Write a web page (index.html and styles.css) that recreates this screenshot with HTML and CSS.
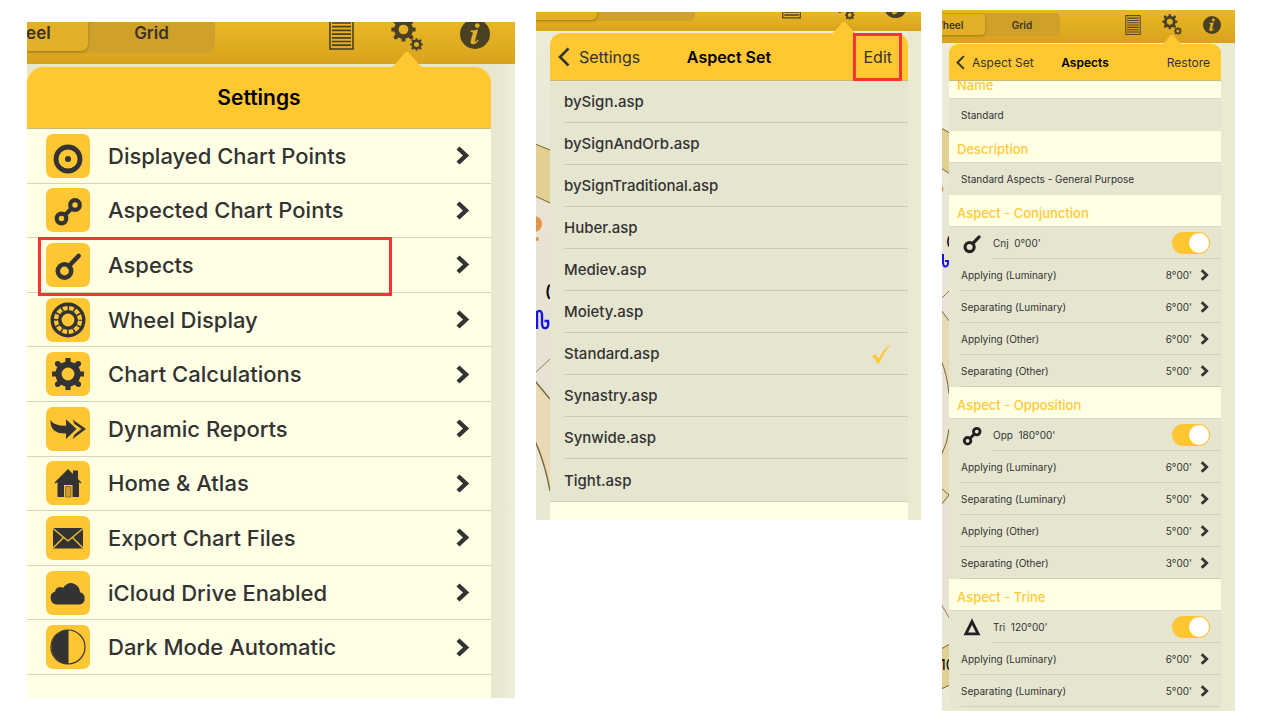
FILE: index.html
```
<!DOCTYPE html>
<html lang="en">
<head>
    <meta charset="UTF-8">
    <meta name="viewport" content="width=device-width, initial-scale=1.0">
    <title>Aspect settings</title>
    <link rel="stylesheet" href="styles.css">
</head>
<body>
    <!-- shared icons -->
    <svg class="sprite" aria-hidden="true">
        <symbol id="gear" viewBox="-16 -16 32 32">
            <circle r="9.2" fill="none" stroke="currentColor" stroke-width="6"/>
            <path d="M0-11V-15.500M0 11V15.500M-11 0H-15.500M11 0H15.500M-7-7L-10-10M7-7L10-10M-7 7L-10 10M7 7L10 10" stroke="currentColor" stroke-width="5"/>
            <path d="M-10-10h0M10-10h0M-10 10h0M10 10h0" stroke="currentColor" stroke-width="5.400" stroke-linecap="round"/>
        </symbol>
        <symbol id="gears" viewBox="0 0 32 34">
            <use href="#gear" x="0" y="0" width="25" height="25"/>
            <use href="#gear" x="19" y="21" width="13" height="13"/>
        </symbol>
        <symbol id="page" viewBox="0 0 25 32">
            <rect x="1" y="1" width="23" height="30" fill="none" stroke="currentColor" stroke-width="1.600"/>
            <path d="M3 5h19M3 8.700h19M3 12.400h19M3 16.100h19M3 19.800h19M3 23.500h19M3 27.200h19" stroke="currentColor" stroke-width="1.700"/>
        </symbol>
        <symbol id="info" viewBox="0 0 30 30">
            <circle cx="15" cy="15" r="15" fill="currentColor"/>
            <circle cx="17.300" cy="6.600" r="2.400" fill="#e2ae22"/>
            <path d="M10.600 11.600q4-.2 7.400-1.200l-3 11q-.4 1.700.7 1.200q1-.6 2-2l.8.7q-2.300 4.200-5.700 4q-3-.3-2-4l2-7q.4-1.500-2.400-1.500z" fill="#e2ae22"/>
        </symbol>
        <symbol id="chevron" viewBox="0 0 13 19">
            <path d="M2 2l8 7.500l-8 7.500" fill="none" stroke="currentColor" stroke-width="4.400"/>
        </symbol>
        <symbol id="back" viewBox="0 0 12 20">
            <path d="M10.500 1.500L2 10l8.500 8.500" fill="none" stroke="currentColor" stroke-width="2.600"/>
        </symbol>
        <symbol id="arrow" viewBox="0 0 40 18">
            <path d="M0 18q4-.5 6.500-3L17.500 2.300q2.500-2.600 5 0L33.500 15q2.500 2.500 6.500 3z" fill="#ffc832"/>
        </symbol>
        <symbol id="conjunction" viewBox="0 0 44 44">
            <circle cx="18.500" cy="28" r="6.700" fill="none" stroke="currentColor" stroke-width="4.600"/>
            <path d="M23 23L32.500 13" stroke="currentColor" stroke-width="4.600" stroke-linecap="round"/>
        </symbol>
        <symbol id="opposition" viewBox="0 0 44 44">
            <circle cx="15.500" cy="30.500" r="4.800" fill="none" stroke="currentColor" stroke-width="4.200"/>
            <circle cx="29" cy="17" r="4.800" fill="none" stroke="currentColor" stroke-width="4.200"/>
            <path d="M19 27L25.500 20.500" stroke="currentColor" stroke-width="4.200"/>
        </symbol>
    </svg>

    <main class="board">
        <!-- settings menu -->
        <section class="phone large">
            <div class="topbar">
                <div class="tools">
                    <div class="segments">
                        <button class="on">Wheel</button>
                        <button>Grid</button>
                    </div>
                    <button class="tool" aria-label="Report"><svg class="page"><use href="#page"/></svg></button>
                    <button class="tool" aria-label="Settings"><svg class="gears"><use href="#gears"/></svg></button>
                    <button class="tool" aria-label="Info"><svg class="info"><use href="#info"/></svg></button>
                </div>
            </div>
            <div class="backdrop">
                <div class="panel">
                    <svg class="arrow"><use href="#arrow"/></svg>
                    <header class="head"><h2>Settings</h2></header>
                    <ul class="menu">
                        <li><a href="#">
                            <svg class="tile" viewBox="0 0 44 44"><circle cx="22" cy="25" r="12" fill="none" stroke="currentColor" stroke-width="4.800"/><circle cx="22" cy="25" r="3"/></svg>
                            <span>Displayed Chart Points</span><svg class="chev"><use href="#chevron"/></svg></a></li>
                        <li><a href="#">
                            <svg class="tile"><use href="#opposition"/></svg>
                            <span>Aspected Chart Points</span><svg class="chev"><use href="#chevron"/></svg></a></li>
                        <li class="marked"><a href="#">
                            <svg class="tile"><use href="#conjunction"/></svg>
                            <span>Aspects</span><svg class="chev"><use href="#chevron"/></svg></a></li>
                        <li><a href="#">
                            <svg class="tile" viewBox="0 0 44 44"><g fill="none" stroke="currentColor"><circle cx="22" cy="22" r="15.800" stroke-width="3.400"/><circle cx="22" cy="22" r="8.200" stroke-width="3.600"/><circle cx="22" cy="22" r="12" stroke-width="5" stroke-dasharray="1.600 4.683" stroke-dashoffset=".8"/></g></svg>
                            <span>Wheel Display</span><svg class="chev"><use href="#chevron"/></svg></a></li>
                        <li><a href="#">
                            <svg class="tile" viewBox="0 0 44 44"><use href="#gear" x="5.500" y="5.500" width="33" height="33"/></svg>
                            <span>Chart Calculations</span><svg class="chev"><use href="#chevron"/></svg></a></li>
                        <li><a href="#">
                            <svg class="tile" viewBox="0 0 44 44"><path d="M4.500 13Q8 19 20 18.800V12.300L30.500 22L20 32V26.500Q4 27 4.500 13z"/><path d="M26.500 12.500L40 22L26.500 32L28.500 27.500L35.500 22L28.500 17z"/></svg>
                            <span>Dynamic Reports</span><svg class="chev"><use href="#chevron"/></svg></a></li>
                        <li><a href="#">
                            <svg class="tile" viewBox="0 0 44 44"><path d="M22 8L35.500 21.500L34.500 22.500L33 21V36H26.500V24H18V36H11.500V21L9.500 22.500L8.500 21.500z"/><path d="M27 9.500h5v9l-5-5z"/><path d="M19.500 25.500h5.500V36h-5.500z" fill="#c99c2c" stroke="#7a6228" stroke-width=".8"/></svg>
                            <span>Home &amp; Atlas</span><svg class="chev"><use href="#chevron"/></svg></a></li>
                        <li><a href="#">
                            <svg class="tile" viewBox="0 0 44 44"><path d="M7 12H37V32.500H7z"/><path d="M7 12.500L22 25L37 12.500M7 32L17.500 21.500M37 32L26.500 21.500" fill="none" stroke="#ffc634" stroke-width="1.200"/></svg>
                            <span>Export Chart Files</span><svg class="chev"><use href="#chevron"/></svg></a></li>
                        <li><a href="#">
                            <svg class="tile" viewBox="0 0 44 44"><path d="M11 33.500A6.700 6.700 0 0 1 9 20.500A5.200 5.200 0 0 1 17 17A9 9 0 0 1 34 21.300A6.300 6.300 0 0 1 34 33.500z"/></svg>
                            <span>iCloud Drive Enabled</span><svg class="chev"><use href="#chevron"/></svg></a></li>
                        <li><a href="#">
                            <svg class="tile" viewBox="0 0 44 44"><circle cx="22" cy="22" r="17" fill="none" stroke="currentColor" stroke-width="1.200"/><path d="M22.500 5A17 17 0 0 0 22.500 39z"/></svg>
                            <span>Dark Mode Automatic</span><svg class="chev"><use href="#chevron"/></svg></a></li>
                    </ul>
                </div>
            </div>
        </section>

        <!-- list of aspect sets -->
        <section class="phone medium">
            <div class="topbar">
                <div class="tools">
                    <div class="segments">
                        <button class="on" aria-label="Wheel"></button>
                        <button aria-label="Grid"></button>
                    </div>
                    <button class="tool" aria-label="Report"><svg class="page"><use href="#page"/></svg></button>
                    <button class="tool" aria-label="Settings"><svg class="gears"><use href="#gears"/></svg></button>
                    <button class="tool" aria-label="Info"><svg class="info"><use href="#info"/></svg></button>
                </div>
            </div>
            <div class="backdrop">
                <svg class="chart" viewBox="0 0 14 489" preserveAspectRatio="xMinYMin slice">
                    <path d="M-1 111L14 117V170L-1 163z" fill="#e1d092"/>
                    <path d="M-1 111L14 117M14 170L-1 163" stroke="#77652a"/>
                    <circle cx="-2" cy="191" r="8" fill="#e29645"/>
                    <circle cx="1" cy="206" r="2" fill="#e29645"/>
                    <text x="9" y="264" font-size="16" font-weight="600">(</text>
                    <path d="M1 296V279Q5 276 6 281V290Q6 296 10 295Q13 294 12 288H8.500" fill="none" stroke="#1414e6" stroke-width="2.400"/>
                    <path d="M-1 348L14 366V458Q9 430-1 408z" fill="#e7dab4"/>
                    <path d="M-1 340L14 326" stroke="#8d8052"/>
                    <path d="M-1 348L14 366M-1 408Q9 430 14 458" fill="none" stroke="#77652a" stroke-width="1.400"/>
                </svg>
                <div class="panel">
                    <svg class="arrow"><use href="#arrow"/></svg>
                    <header class="head">
                        <button class="link"><svg class="back"><use href="#back"/></svg>Settings</button>
                        <h2>Aspect Set</h2>
                        <button class="link edit">Edit</button>
                    </header>
                    <ul class="files">
                        <li>bySign.asp</li>
                        <li>bySignAndOrb.asp</li>
                        <li>bySignTraditional.asp</li>
                        <li>Huber.asp</li>
                        <li>Mediev.asp</li>
                        <li>Moiety.asp</li>
                        <li>Standard.asp <svg class="check" viewBox="0 0 20 20"><path d="M1 12L4.500 10.500L7.500 15.500Q12 6 19 1Q12.500 8.500 8 19H6.500Q4.500 14.500 1 12z" fill="#ffc634" stroke="#ffc634" stroke-width=".5"/></svg></li>
                        <li>Synastry.asp</li>
                        <li>Synwide.asp</li>
                        <li>Tight.asp</li>
                    </ul>
                </div>
            </div>
        </section>

        <!-- orbs of the chosen set -->
        <section class="phone small">
            <div class="topbar">
                <div class="tools">
                    <div class="segments">
                        <button class="on">Wheel</button>
                        <button>Grid</button>
                    </div>
                    <button class="tool" aria-label="Report"><svg class="page"><use href="#page"/></svg></button>
                    <button class="tool" aria-label="Settings"><svg class="gears"><use href="#gears"/></svg></button>
                    <button class="tool" aria-label="Info"><svg class="info"><use href="#info"/></svg></button>
                </div>
            </div>
            <div class="backdrop">
                <svg class="chart" viewBox="0 0 7 667" preserveAspectRatio="xMinYMin slice">
                    <path d="M-1 84L8 89V130L-1 124z" fill="#e1d092"/>
                    <path d="M-1 84L8 89M8 130L-1 124" stroke="#77652a"/>
                    <circle cx="-2" cy="145" r="3.500" fill="#e29645"/>
                    <text x="4" y="201" font-size="12" font-weight="600">(</text>
                    <path d="M1 210V218Q1 223 4 222.500Q6.500 222 6 217H3" fill="none" stroke="#1414e6" stroke-width="2"/>
                    <path d="M-1 266L8 278V450L-1 462V408Q8 390 8 370Q8 340-1 316z" fill="#e7dab4"/>
                    <path d="M-1 408Q8 390 8 366Q8 340-1 316z" fill="#e8e2d4"/>
                    <path d="M-1 255L8 246M-1 560L8 575" stroke="#8d8052"/>
                    <path d="M-1 266L8 278M-1 316Q5 330 7 350M7 385Q6 398-1 412M-1 444L7 451L-1 461" fill="none" stroke="#77652a"/>
                    <path d="M-1 605L8 600V641L-1 645z" fill="#e1d092"/>
                    <path d="M-1 605L8 600M8 641L-1 645" stroke="#77652a"/>
                    <text x="-2" y="626" font-size="14">10</text>
                </svg>
                <div class="panel">
                    <svg class="arrow"><use href="#arrow"/></svg>
                    <header class="head">
                        <button class="link"><svg class="back"><use href="#back"/></svg>Aspect Set</button>
                        <h2>Aspects</h2>
                        <button class="link">Restore</button>
                    </header>
                    <div class="scroll">
                        <div class="orbs">
                            <h3>Name</h3>
                            <p>Standard</p>
                            <h3>Description</h3>
                            <p>Standard Aspects - General Purpose</p>

                            <h3>Aspect - Conjunction</h3>
                            <label class="aspect"><svg class="glyph"><use href="#conjunction"/></svg><span>Cnj&nbsp; 0°00'</span><input type="checkbox" checked></label>
                            <a href="#">Applying (Luminary)<b>8°00'</b><svg class="chev"><use href="#chevron"/></svg></a>
                            <a href="#">Separating (Luminary)<b>6°00'</b><svg class="chev"><use href="#chevron"/></svg></a>
                            <a href="#">Applying (Other)<b>6°00'</b><svg class="chev"><use href="#chevron"/></svg></a>
                            <a href="#">Separating (Other)<b>5°00'</b><svg class="chev"><use href="#chevron"/></svg></a>

                            <h3>Aspect - Opposition</h3>
                            <label class="aspect"><svg class="glyph"><use href="#opposition"/></svg><span>Opp&nbsp; 180°00'</span><input type="checkbox" checked></label>
                            <a href="#">Applying (Luminary)<b>6°00'</b><svg class="chev"><use href="#chevron"/></svg></a>
                            <a href="#">Separating (Luminary)<b>5°00'</b><svg class="chev"><use href="#chevron"/></svg></a>
                            <a href="#">Applying (Other)<b>5°00'</b><svg class="chev"><use href="#chevron"/></svg></a>
                            <a href="#">Separating (Other)<b>3°00'</b><svg class="chev"><use href="#chevron"/></svg></a>

                            <h3>Aspect - Trine</h3>
                            <label class="aspect"><svg class="glyph" viewBox="0 0 44 44"><path d="M22 14L31 32H13z" fill="none" stroke="currentColor" stroke-width="4.200"/></svg><span>Tri&nbsp; 120°00'</span><input type="checkbox" checked></label>
                            <a href="#">Applying (Luminary)<b>6°00'</b><svg class="chev"><use href="#chevron"/></svg></a>
                            <a href="#">Separating (Luminary)<b>5°00'</b><svg class="chev"><use href="#chevron"/></svg></a>
                        </div>
                    </div>
                </div>
            </div>
        </section>
    </main>
</body>
</html>
```

FILE: styles.css
```
*{margin: 0; padding: 0; box-sizing: border-box;}
body{
    background-color: #fff;
    color: #333;
    font-family: Inter, "Liberation Sans", sans-serif;
}
ul{list-style: none;}
a{color: inherit; text-decoration: none;}
button{
    border: none;
    background: none;
    color: inherit;
    font: inherit;
    cursor: pointer;
}
svg{display: block; flex: none;}
.sprite{
    position: absolute;
    width: 0;
    height: 0;
}
.board{
    display: flex;
    align-items: flex-start;
    gap: 21px;
    padding: 10px 45px 0 27px;
}
.phone{
    min-width: 0;
    overflow: hidden;
}
.large{flex: 488 1 0; margin-top: 12px;}
.medium{flex: 385 1 0; margin-top: 2px;}
.small{flex: 293 1 0;}

/* toolbar */
.topbar{
    overflow: hidden;
    background: linear-gradient(#eab726, #d8a31c);
}
.tools{
    display: flex;
    align-items: center;
}
.tool{color: #4a4125;}
.segments{
    display: flex;
    height: 100%;
    margin-right: auto;
    background-color: #cfa12a;
    color: #3a3424;
    font-weight: 600;
}
.segments .on{
    background-color: #e3af26;
    box-shadow: 0 1px 3px rgba(90, 60, 0, 0.4);
}
.large .topbar{padding-bottom: 11px;}
.large .tools{
    height: 38px;
    margin-top: -7px;
    padding-right: 25px;
    gap: 37px;
}
.large .segments{
    margin-left: -66px;
    padding-bottom: 2px;
    border-radius: 9px;
    font-size: 17px;
}
.large .segments button{width: 127px; border-radius: 7px;}
.large .page{width: 25px; height: 32px;}
.large .gears{width: 32px; height: 34px;}
.large .info{width: 30px; height: 30px;}

.medium .topbar{padding-bottom: 10px;}
.medium .tools{
    height: 29px;
    margin-top: -20px;
    padding-right: 14px;
    gap: 29px;
}
.medium .segments{
    margin-left: -37px;
    padding-bottom: 1px;
    border-radius: 7px;
}
.medium .segments button{width: 98px; border-radius: 6px;}
.medium .page{width: 19px; height: 25px;}
.medium .gears{width: 25px; height: 26px;}
.medium .info{width: 23px; height: 23px;}

.small .topbar{padding-bottom: 7px;}
.small .tools{
    height: 23px;
    margin-top: 3px;
    padding-right: 14px;
    gap: 21px;
}
.small .segments{
    margin-left: -32px;
    padding: 1px;
    border-radius: 5px;
    font-size: 10px;
}
.small .segments button{width: 74px; border-radius: 4px;}
.small .page{width: 16px; height: 20px;}
.small .gears{width: 20px; height: 21px;}
.small .info{width: 18px; height: 18px;}

/* chart behind the popover */
.backdrop{
    display: flex;
    background: linear-gradient(#ececd8, #e8e2d4 45%, #e8e2d4 80%, #eaead3);
}
.large .backdrop{
    padding: 3px 24px 0 0;
    background: linear-gradient(to right, #e7e7cf 95%, #ededd9);
}
.medium .backdrop{padding: 2px 13px 0 0;}
.small .backdrop{padding: 1px 14px 2px 0;}
.medium .chart{width: 14px; height: 487px;}
.small .chart{width: 7px; height: 664px;}
.medium .backdrop, .small .backdrop{
    background:
        linear-gradient(#eaead3, #eaead3) right / 14px 100% no-repeat,
        linear-gradient(#ececd8, #e8e2d4 45%, #e8e2d4 80%, #eaead3);
}

/* popover */
.panel{
    position: relative;
    flex: 1;
    min-width: 0;
    background-color: #ffffe6;
}
.arrow{position: absolute; bottom: 100%;}
.head{
    display: grid;
    grid-template-columns: 1fr auto 1fr;
    align-items: center;
    background-color: #ffc832;
    border-bottom: 1px solid #c8b878;
}
.head h2{
    grid-column: 2;
    color: #000;
    font-weight: 600;
}
.link{
    display: flex;
    align-items: center;
    justify-self: start;
}
.head h2 + .link{justify-self: end;}

.large .panel{border-radius: 16px 16px 0 0; padding-bottom: 23px;}
.large .arrow{right: 64px; width: 40px; height: 17px; margin-bottom: -1px;}
.large .head{height: 62px; border-radius: 16px 16px 0 0;}
.large h2{font-size: 21px;}
.menu{
    display: grid;
    grid-auto-rows: 1fr;
    min-height: 546px;
}
.menu li{
    position: relative;
    border-bottom: 1px solid #d4d4c2;
}
.menu a{
    display: flex;
    align-items: center;
    height: 100%;
    padding: 0 22px 0 19px;
    font-size: 22px;
    font-weight: 500;
}
.menu span{flex: 1; padding-left: 18px;}
.tile{
    width: 44px;
    height: 44px;
    border-radius: 7px;
    background-color: #ffc634;
    color: #333;
    fill: currentColor;
}
.menu .chev{width: 13px; height: 19px;}
/* red frame round the item to tap */
.marked::after{
    content: "";
    position: absolute;
    top: -1px;
    right: 99px;
    bottom: -4px;
    left: 11px;
    z-index: 1;
    border: 3px solid #ff3333;
    pointer-events: none;
}

.medium .panel{border-radius: 12px 12px 0 0; padding-bottom: 18px;}
.medium .arrow{right: 49px; width: 30px; height: 13px; margin-bottom: -1px;}
.medium .head{height: 48px; padding: 0 8px; border-radius: 12px 12px 0 0;}
.medium h2, .medium .link{font-size: 16px;}
.medium .back{width: 12px; height: 20px; margin-right: 9px;}
.edit{position: relative; margin-right: 8px;}
.edit::after{
    content: "";
    position: absolute;
    inset: -14px -10px;
    border: 3px solid #ff3333;
    pointer-events: none;
}
.files{
    display: grid;
    grid-auto-rows: 1fr;
    min-height: 421px;
    padding-left: 14px;
    background-color: #e5e5d0;
    border-bottom: 1px solid #cfcfbc;
    font-size: 15px;
    font-weight: 500;
}
.files li{
    display: flex;
    align-items: center;
    justify-content: space-between;
    padding-right: 17px;
    border-bottom: 1px solid #cacab8;
}
.files li:last-child{border-bottom: none;}
.check{width: 20px; height: 20px;}

.small .panel{
    border-radius: 9px 9px 6px 6px;
    background-color: #e5e5d0;
}
.small .arrow{right: 37px; width: 24px; height: 11px; margin-bottom: -1px;}
.small .head{height: 37px; padding: 0 7px; border-radius: 9px 9px 0 0;}
.small h2, .small .link{font-size: 12px;}
.small .head h2 + .link{margin-right: 4px;}
.small .back{width: 9px; height: 15px; margin-right: 7px;}
.scroll{overflow: hidden;}
/* scrolled a little way down */
.orbs{
    margin-top: -14px;
    padding-bottom: 2px;
    font-size: 10px;
}
.orbs h3{
    height: 32px;
    padding-left: 8px;
    background-color: #ffffe6;
    border-bottom: 1px solid #d6d6c2;
    color: #ffc938;
    font-size: 13px;
    font-weight: 500;
    line-height: 36px;
}
.orbs p{
    height: 32px;
    padding-left: 12px;
    line-height: 32px;
}
.orbs a, .aspect{
    display: flex;
    align-items: center;
    height: 32px;
    margin-left: 12px;
    padding-right: 12px;
    border-bottom: 1px solid #cfcfbc;
}
.orbs b{
    margin-left: auto;
    padding-right: 8px;
    font-weight: 400;
}
.orbs .chev{width: 9px; height: 12px;}
.aspect{
    margin-left: 44px;
    padding-right: 11px;
}
.aspect .glyph{
    width: 30px;
    height: 30px;
    margin: 0 6px 0 -36px;
    color: #222;
}
.aspect input{
    appearance: none;
    display: flex;
    justify-content: flex-end;
    width: 38px;
    height: 22px;
    margin-left: auto;
    padding: 1px;
    border-radius: 11px;
    background-color: #ffc634;
}
.aspect input::before{
    content: "";
    width: 20px;
    height: 20px;
    border-radius: 50%;
    background-color: #fff;
}
```
